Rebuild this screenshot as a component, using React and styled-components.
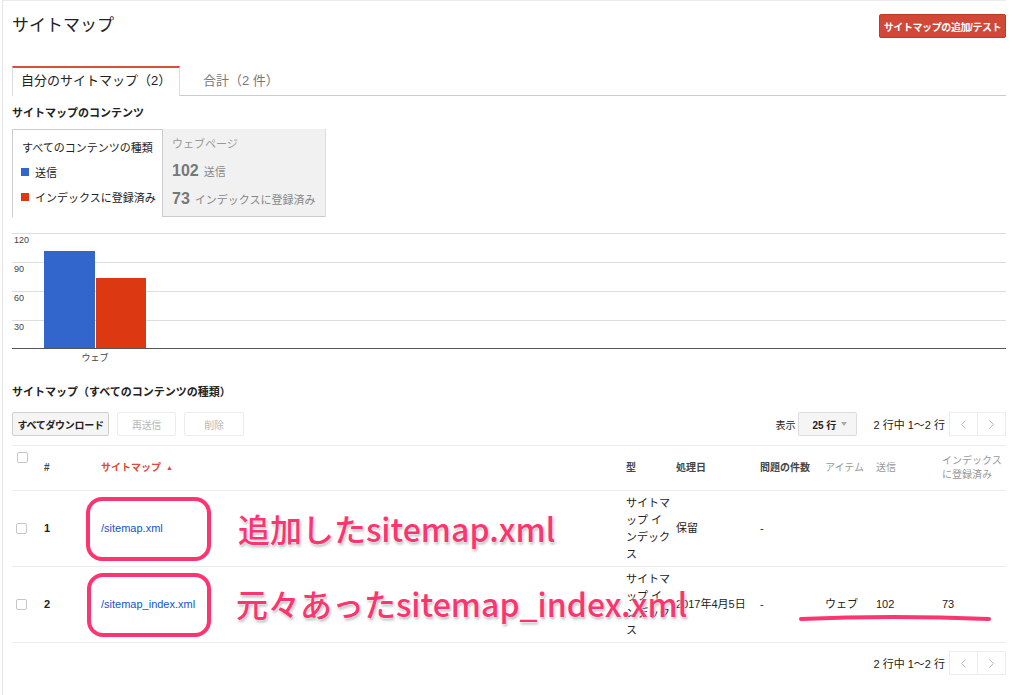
import React from 'react';
import styled, { createGlobalStyle } from 'styled-components';
import { ChevronLeft, ChevronRight } from 'lucide-react';

const GlobalStyle = createGlobalStyle`
  html, body {
    margin: 0;
    padding: 0;
    background: #fff;
  }
  body {
    font-family: "Liberation Sans", "Noto Sans CJK JP", sans-serif;
    color: #222;
  }
`;

const Page = styled.div`
  position: relative;
  margin-left: 2px;
  width: 994px;
  min-height: 694px;
  padding-left: 9px;
  border-left: 1px solid #e5e5e5;
  border-top: 1px solid #ebebeb;
`;

const Header = styled.div`
  display: flex;
  justify-content: space-between;
  align-items: center;
  height: 24px;
  margin-top: 13px;
`;

const Title = styled.h1`
  margin: 0;
  font-size: 17px;
  font-weight: normal;
  line-height: 24px;
  color: #222;
`;

const PrimaryButton = styled.button`
  width: 127px;
  height: 24px;
  border: 1px solid #c53727;
  border-radius: 2px;
  background: #d14836;
  color: #fff;
  font-family: inherit;
  font-size: 10px;
  font-weight: bold;
  letter-spacing: -0.4px;
  padding: 0;
`;

const TabBar = styled.div`
  display: flex;
  align-items: flex-start;
  height: 29px;
  margin-top: 28px;
  border-bottom: 1px solid #ccc;
`;

const Tab = styled.div`
  box-sizing: border-box;
  height: 30px;
  font-size: 13px;
  line-height: 25px;
  ${({ $active }) =>
    $active
      ? `
    width: 168px;
    padding: 0 8px;
    background: #fff;
    color: #222;
    border-top: 2px solid #dd4b39;
    border-left: 1px solid #ddd;
    border-right: 1px solid #ddd;
  `
      : `
    padding: 2px 23px 0;
    color: #777;
  `}
`;

const SectionLabel = styled.div`
  margin-top: ${({ $top }) => $top}px;
  font-size: 11px;
  font-weight: bold;
  line-height: 14px;
  color: #222;
`;

const Legend = styled.div`
  display: flex;
  margin-top: 9px;
  height: 88px;
`;

const LegendPanel = styled.div`
  box-sizing: border-box;
  width: 151px;
  padding: 4px 0 8px 8px;
  border: 1px solid #ccc;
  border-bottom: none;
  background: #fff;
`;

const LegendRow = styled.div`
  display: flex;
  align-items: center;
  gap: 6px;
  height: 25px;
  font-size: 11px;
  color: #222;
  padding-left: ${({ $indent }) => ($indent ? 1 : 0)}px;
`;

const Swatch = styled.span`
  width: 8px;
  height: 8px;
  background: ${({ $color }) => $color};
`;

const StatsPanel = styled.div`
  box-sizing: border-box;
  width: 163px;
  padding: 3px 9px;
  background: #f1f1f1;
  border-bottom: 1px solid #ccc;
  border-right: 1px solid #ddd;
`;

const StatsTitle = styled.div`
  height: 25px;
  line-height: 25px;
  font-size: 11px;
  color: #999;
`;

const StatRow = styled.div`
  display: flex;
  align-items: center;
  height: 28px;
  font-size: 11px;
  color: #888;
`;

const StatNumber = styled.span`
  font-size: 16px;
  font-weight: bold;
  color: #777;
  margin-right: 5px;
`;

const ChartBox = styled.div`
  margin-top: 11px;
  height: 136px;
`;

const Toolbar = styled.div`
  display: flex;
  justify-content: space-between;
  align-items: center;
  height: 24px;
  margin-top: ${({ $top }) => $top}px;
`;

const ButtonGroup = styled.div`
  display: flex;
  align-items: center;
  gap: 8px;
`;

const ToolButton = styled.button`
  box-sizing: border-box;
  height: 24px;
  width: ${({ $width }) => $width}px;
  padding: 0;
  border-radius: 2px;
  font-family: inherit;
  font-size: 10px;
  letter-spacing: -0.3px;
  ${({ $disabled }) =>
    $disabled
      ? `
    border: 1px solid #ececec;
    background: #fff;
    color: #b8b8b8;
  `
      : `
    border: 1px solid #d0d0d0;
    background: #f5f5f5;
    color: #222;
    font-weight: bold;
  `}
`;

const Pager = styled.div`
  display: flex;
  align-items: center;
  font-size: 11px;
  color: #222;
`;

const ShowLabel = styled.span`
  font-size: 10px;
  margin-right: 3px;
`;

const Select = styled.div`
  box-sizing: border-box;
  display: flex;
  align-items: center;
  gap: 5px;
  width: 59px;
  height: 24px;
  padding-left: 13px;
  margin-right: 16px;
  border: 1px solid #ddd;
  border-radius: 2px;
  background: #f5f5f5;
  font-size: 10px;
  font-weight: bold;
`;

const Caret = styled.span`
  width: 0;
  height: 0;
  border-left: 3px solid transparent;
  border-right: 3px solid transparent;
  border-top: 4px solid #aaa;
`;

const PageArrows = styled.div`
  display: flex;
  margin-left: 4px;
`;

const ArrowButton = styled.div`
  box-sizing: border-box;
  display: flex;
  align-items: center;
  justify-content: center;
  width: 29px;
  height: 24px;
  border: 1px solid #ececec;
  margin-left: ${({ $joined }) => ($joined ? -1 : 0)}px;
  background: #fff;
  color: #b0b0b0;
`;

const columns = '28px 57px 525px 50px 84px 65px 51px 66px 68px';

const Table = styled.div`
  margin-top: 9px;
  border-top: 1px solid #ebebeb;
`;

const HeadRow = styled.div`
  display: grid;
  grid-template-columns: ${columns};
  align-items: center;
  height: 44px;
  border-bottom: 1px solid #ebebeb;
`;

const BodyRow = styled.div`
  display: grid;
  grid-template-columns: ${columns};
  align-items: center;
  border-bottom: 1px solid #ebebeb;
`;

const HeadCell = styled.div`
  padding-left: 4px;
  font-size: 10px;
  line-height: 14px;
  font-weight: ${({ $muted }) => ($muted ? 'normal' : 'bold')};
  color: ${({ $muted, $sorted }) => ($sorted ? '#dd4b39' : $muted ? '#999' : '#444')};
  align-self: ${({ $top }) => ($top ? 'start' : 'center')};
  padding-top: ${({ $top }) => ($top ? 6 : 0)}px;
`;

const SortArrow = styled.span`
  font-size: 7px;
  margin-left: 5px;
  vertical-align: 1px;
`;

const Cell = styled.div`
  padding-left: 4px;
  font-size: 11px;
  line-height: 17px;
  color: #222;
  font-weight: ${({ $bold }) => ($bold ? 'bold' : 'normal')};
`;

const TypeCell = styled(Cell)`
  padding: 4px 1px 3px 4px;
  line-break: anywhere;
  word-break: break-all;
`;

const Checkbox = styled.span`
  display: block;
  box-sizing: border-box;
  width: ${({ $size }) => $size}px;
  height: ${({ $size }) => $size}px;
  margin-left: ${({ $offset }) => $offset}px;
  border: 1px solid #c6c6c6;
  border-radius: 2px;
  background: #fff;
`;

const Link = styled.a`
  color: #1155cc;
  text-decoration: none;
`;

const Footer = styled.div`
  display: flex;
  justify-content: flex-end;
  align-items: center;
  height: 24px;
  margin-top: 8px;
`;

const pink = '#fc3470';

const HighlightBox = styled.div`
  position: absolute;
  box-sizing: border-box;
  left: ${({ $x }) => $x}px;
  top: ${({ $y }) => $y}px;
  width: ${({ $w }) => $w}px;
  height: 64px;
  border: 4px solid ${pink};
  border-radius: 16px;
`;

const Note = styled.div`
  position: absolute;
  left: ${({ $x }) => $x}px;
  top: ${({ $y }) => $y}px;
  font-family: "Noto Sans CJK JP", sans-serif;
  font-size: 32px;
  font-weight: 500;
  line-height: 36px;
  white-space: nowrap;
  color: ${pink};
  text-shadow: 0 0 2px #fff, 0 0 3px #fff, 1px 2px 3px rgba(0, 0, 0, 0.35);
`;

const Underline = styled.svg`
  position: absolute;
  left: 793px;
  top: 609px;
`;

const gridLines = [
  { y: 5, label: '120' },
  { y: 34, label: '90' },
  { y: 63, label: '60' },
  { y: 92, label: '30' },
];

const Chart = () => (
  <svg width="994" height="136">
    {gridLines.map((g) => (
      <g key={g.label}>
        <line x1="0" x2="994" y1={g.y + 0.5} y2={g.y + 0.5} stroke="#ddd" />
        <text x="2" y={g.y + 10} fontSize="9" fill="#444" fontFamily="Liberation Sans, sans-serif">
          {g.label}
        </text>
      </g>
    ))}
    <rect x="32" y="23" width="51" height="97" fill="#3366cc" />
    <rect x="84" y="50" width="50" height="70" fill="#dc3912" />
    <line x1="0" x2="994" y1="120.5" y2="120.5" stroke="#555" />
    <text x="83" y="133" fontSize="9" fill="#444" textAnchor="middle" fontFamily="Noto Sans CJK JP, sans-serif">
      ウェブ
    </text>
  </svg>
);

const Pagination = ({ withSize }) => (
  <Pager>
    {withSize && (
      <>
        <ShowLabel>表示</ShowLabel>
        <Select>
          25 行 <Caret />
        </Select>
      </>
    )}
    <span>2 行中 1～2 行</span>
    <PageArrows>
      <ArrowButton>
        <ChevronLeft size={15} strokeWidth={1.5} />
      </ArrowButton>
      <ArrowButton $joined>
        <ChevronRight size={15} strokeWidth={1.5} />
      </ArrowButton>
    </PageArrows>
  </Pager>
);

const rows = [
  { id: 1, path: '/sitemap.xml', status: '保留', issues: '-', item: '', sent: '', indexed: '' },
  { id: 2, path: '/sitemap_index.xml', status: '2017年4月5日', issues: '-', item: 'ウェブ', sent: '102', indexed: '73' },
];

export default function App() {
  return (
    <>
      <GlobalStyle />
      <Page>
        <Header>
          <Title>サイトマップ</Title>
          <PrimaryButton>サイトマップの追加/テスト</PrimaryButton>
        </Header>

        <TabBar>
          <Tab $active>自分のサイトマップ（2）</Tab>
          <Tab>合計（2 件）</Tab>
        </TabBar>

        <SectionLabel $top={10}>サイトマップのコンテンツ</SectionLabel>

        <Legend>
          <LegendPanel>
            <LegendRow $indent>すべてのコンテンツの種類</LegendRow>
            <LegendRow>
              <Swatch $color="#3366cc" />
              送信
            </LegendRow>
            <LegendRow>
              <Swatch $color="#dc3912" />
              インデックスに登録済み
            </LegendRow>
          </LegendPanel>
          <StatsPanel>
            <StatsTitle>ウェブページ</StatsTitle>
            <StatRow>
              <StatNumber>102</StatNumber>送信
            </StatRow>
            <StatRow>
              <StatNumber>73</StatNumber>インデックスに登録済み
            </StatRow>
          </StatsPanel>
        </Legend>

        <ChartBox>
          <Chart />
        </ChartBox>

        <SectionLabel $top={21}>サイトマップ（すべてのコンテンツの種類）</SectionLabel>

        <Toolbar $top={13}>
          <ButtonGroup>
            <ToolButton $width={97}>すべてダウンロード</ToolButton>
            <ToolButton $width={59} $disabled>再送信</ToolButton>
            <ToolButton $width={60} $disabled>削除</ToolButton>
          </ButtonGroup>
          <Pagination withSize />
        </Toolbar>

        <Table>
          <HeadRow>
            <HeadCell $top>
              <Checkbox $size={11} $offset={1} />
            </HeadCell>
            <HeadCell>#</HeadCell>
            <HeadCell $sorted>
              サイトマップ<SortArrow>▲</SortArrow>
            </HeadCell>
            <HeadCell>型</HeadCell>
            <HeadCell>処理日</HeadCell>
            <HeadCell>問題の件数</HeadCell>
            <HeadCell $muted>アイテム</HeadCell>
            <HeadCell $muted>送信</HeadCell>
            <HeadCell $muted>
              インデックス
              <br />
              に登録済み
            </HeadCell>
          </HeadRow>
          {rows.map((r) => (
            <BodyRow key={r.id}>
              <Cell>
                <Checkbox $size={11} $offset={0} />
              </Cell>
              <Cell $bold>{r.id}</Cell>
              <Cell>
                <Link href="#">{r.path}</Link>
              </Cell>
              <TypeCell>サイトマップ インデックス</TypeCell>
              <Cell>{r.status}</Cell>
              <Cell>{r.issues}</Cell>
              <Cell>{r.item}</Cell>
              <Cell>{r.sent}</Cell>
              <Cell>{r.indexed}</Cell>
            </BodyRow>
          ))}
        </Table>

        <Footer>
          <Pagination />
        </Footer>

        <HighlightBox $x={83} $y={496} $w={125} />
        <HighlightBox $x={84} $y={572} $w={124} />
        <Note $x={235} $y={509}>追加したsitemap.xml</Note>
        <Note $x={233} $y={584}>元々あったsitemap_index.xml</Note>
        <Underline width="200" height="16">
          <path d="M5 9 Q 95 5 193 9" fill="none" stroke={pink} strokeWidth="4" strokeLinecap="round" />
        </Underline>
      </Page>
    </>
  );
}
